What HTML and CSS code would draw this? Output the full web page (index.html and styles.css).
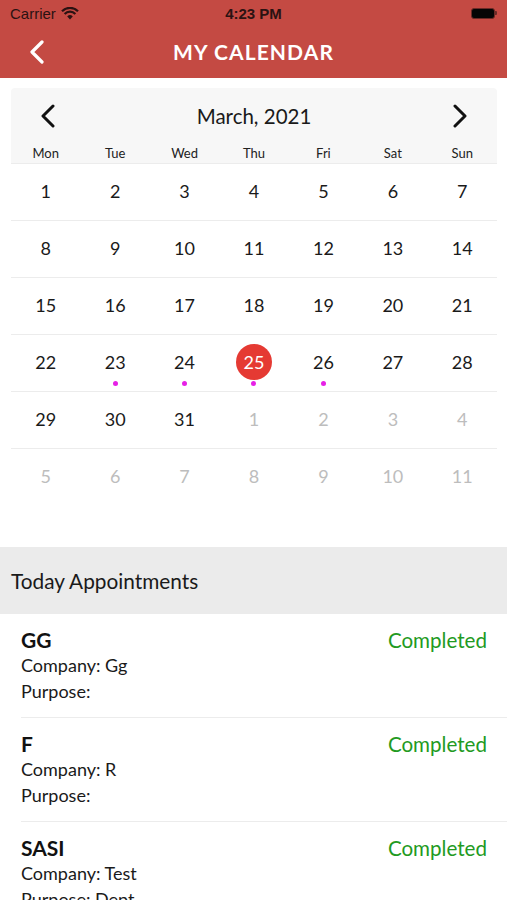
FILE: index.html
```html
<!DOCTYPE html>
<html>
<head>
<meta charset="utf-8">
<link rel="stylesheet" href="styles.css">
</head>
<body>
<div class="top">
  <div class="status">
    <div class="carrier">Carrier
      <svg class="wifi" width="18" height="13" viewBox="0 0 18 13"><path d="M9 12.5 L6.2 9.4 A4 4 0 0 1 11.8 9.4 Z" fill="#2b1212"/><path d="M3.6 6.9 A7.6 7.6 0 0 1 14.4 6.9" stroke="#2b1212" stroke-width="2.2" fill="none"/><path d="M1 4.2 A11.3 11.3 0 0 1 17 4.2" stroke="#2b1212" stroke-width="2.2" fill="none"/></svg>
    </div>
    <div class="time">4:23 PM</div>
    <div class="battery"><span class="bat-body"></span><span class="bat-tip"></span></div>
  </div>
  <div class="nav">
    <svg class="back" width="16" height="24" viewBox="0 0 16 24"><path d="M13 2 L3 12 L13 22" stroke="#fff" stroke-width="3.2" fill="none" stroke-linecap="round" stroke-linejoin="round"/></svg>
    <div class="title">MY CALENDAR</div>
  </div>
</div>

<div class="calendar">
  <div class="cal-head">
    <div class="month-row">
      <svg class="chev" width="16" height="24" viewBox="0 0 16 24"><path d="M13 2 L3 12 L13 22" stroke="#111" stroke-width="3" fill="none" stroke-linecap="round" stroke-linejoin="round"/></svg>
      <div class="month">March, 2021</div>
      <svg class="chev" width="16" height="24" viewBox="0 0 16 24"><path d="M3 2 L13 12 L3 22" stroke="#111" stroke-width="3" fill="none" stroke-linecap="round" stroke-linejoin="round"/></svg>
    </div>
    <div class="weekdays">
      <span>Mon</span><span>Tue</span><span>Wed</span><span>Thu</span><span>Fri</span><span>Sat</span><span>Sun</span>
    </div>
  </div>
  <div class="week"><span class="d">1</span><span class="d">2</span><span class="d">3</span><span class="d">4</span><span class="d">5</span><span class="d">6</span><span class="d">7</span></div>
  <div class="week"><span class="d">8</span><span class="d">9</span><span class="d">10</span><span class="d">11</span><span class="d">12</span><span class="d">13</span><span class="d">14</span></div>
  <div class="week"><span class="d">15</span><span class="d">16</span><span class="d">17</span><span class="d">18</span><span class="d">19</span><span class="d">20</span><span class="d">21</span></div>
  <div class="week"><span class="d">22</span><span class="d dot">23</span><span class="d dot">24</span><span class="d dot"><span class="today">25</span></span><span class="d dot">26</span><span class="d">27</span><span class="d">28</span></div>
  <div class="week"><span class="d">29</span><span class="d">30</span><span class="d">31</span><span class="d out">1</span><span class="d out">2</span><span class="d out">3</span><span class="d out">4</span></div>
  <div class="week last"><span class="d out">5</span><span class="d out">6</span><span class="d out">7</span><span class="d out">8</span><span class="d out">9</span><span class="d out">10</span><span class="d out">11</span></div>
</div>

<div class="section">Today Appointments</div>

<div class="list">
  <div class="item">
    <div class="info">
      <div class="name">GG</div>
      <div class="line">Company: Gg</div>
      <div class="line">Purpose:</div>
    </div>
    <div class="state">Completed</div>
  </div>
  <div class="item">
    <div class="info">
      <div class="name">F</div>
      <div class="line">Company: R</div>
      <div class="line">Purpose:</div>
    </div>
    <div class="state">Completed</div>
  </div>
  <div class="item">
    <div class="info">
      <div class="name">SASI</div>
      <div class="line">Company: Test</div>
      <div class="line">Purpose: Dept</div>
    </div>
    <div class="state">Completed</div>
  </div>
</div>
</body>
</html>
```

FILE: styles.css
```css
* { box-sizing: border-box; }
html, body { margin: 0; padding: 0; }
body {
  width: 507px;
  height: 900px;
  overflow: hidden;
  background: #fff;
  font-family: Lato, "Open Sans", sans-serif;
  color: #111;
}
.top {
  background: #c44a43;
  height: 78px;
}
.status {
  height: 28px;
  display: flex;
  align-items: center;
  justify-content: space-between;
  padding: 0 10px 0 10px;
  position: relative;
  font-family: "Liberation Sans", Arial, sans-serif;
  color: #2b1212;
}
.carrier {
  font-size: 15px;
  display: flex;
  align-items: center;
  gap: 5px;
  margin-top: -2px;
}
.time {
  font-size: 15px;
  font-weight: bold;
  position: absolute;
  left: 0;
  right: 0;
  text-align: center;
  top: 5px;
}
.battery {
  display: flex;
  align-items: center;
  margin-top: -2px;
}
.bat-body {
  width: 24px;
  height: 11px;
  background: #050505;
  border-radius: 3px;
  border: 1px solid #6b2a26;
}
.bat-tip {
  width: 2px;
  height: 4px;
  background: #6b2a26;
  border-radius: 0 1px 1px 0;
}
.nav {
  height: 50px;
  display: flex;
  align-items: center;
  justify-content: center;
  position: relative;
}
.back {
  position: absolute;
  left: 29px;
  top: 12px;
}
.title {
  color: #fff;
  font-weight: bold;
  font-size: 21px;
  letter-spacing: 1.1px;
  margin-top: -4px;
}
.calendar {
  margin: 10px 10px 0 11px;
}
.cal-head {
  background: #f7f7f7;
  border-radius: 4px 4px 0 0;
  border-bottom: 1px solid #ececec;
}
.month-row {
  height: 55px;
  display: flex;
  align-items: center;
  justify-content: space-between;
  padding: 0 29px 0 29px;
}
.month {
  font-size: 20.5px;
  color: #1a1a1a;
}
.weekdays {
  display: grid;
  grid-template-columns: repeat(7, 1fr);
  height: 20px;
  font-size: 13px;
  color: #222;
  text-align: center;
  line-height: 20px;
}
.week {
  display: grid;
  grid-template-columns: repeat(7, 1fr);
  height: 57px;
  border-bottom: 1px solid #ececec;
}
.week.last { border-bottom: none; }
.d {
  position: relative;
  display: flex;
  align-items: center;
  justify-content: center;
  font-size: 18px;
  color: #1a1a1a;
  padding-bottom: 3px;
}
.d.out { color: #bdbdbd; }
.d.dot::after {
  content: "";
  position: absolute;
  width: 5px;
  height: 5px;
  border-radius: 50%;
  background: #e620e6;
  left: 50%;
  margin-left: -2.5px;
  top: 46px;
}
.today {
  width: 36px;
  height: 36px;
  border-radius: 50%;
  background: #e53a33;
  color: #fff;
  display: flex;
  align-items: center;
  justify-content: center;
}
.section {
  margin-top: 41px;
  height: 67px;
  background: #ebebeb;
  display: flex;
  align-items: center;
  padding-left: 11px;
  font-size: 20.8px;
  color: #1a1a1a;
}
.list {
  padding-left: 21px;
}
.item {
  display: flex;
  justify-content: space-between;
  padding: 14px 20px 13px 0;
  border-bottom: 1px solid #ececec;
}
.name {
  font-weight: bold;
  font-size: 21px;
  line-height: 24px;
  color: #111;
}
.line {
  font-size: 18px;
  line-height: 26px;
  color: #1a1a1a;
}
.state {
  color: #229a22;
  font-size: 20.6px;
  line-height: 24px;
}
```
